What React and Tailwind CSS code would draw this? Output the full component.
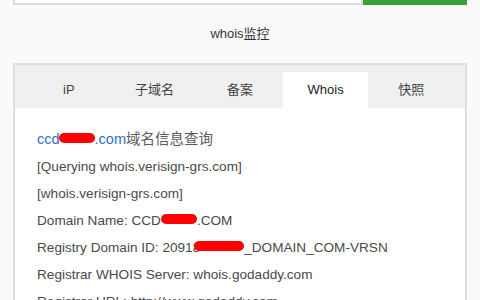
import React from "react";

const font = { fontFamily: '"Liberation Sans", Arial, "Noto Sans CJK SC", sans-serif' };

function Redact({ w, className = "" }) {
  return (
    <span
      className={"inline-block h-[10px] bg-[#ff0000] rounded-full align-middle -translate-y-[2px] " + className}
      style={{ width: w }}
    />
  );
}

export default function App() {
  const tabs = ["iP", "子域名", "备案", "Whois", "快照"];
  return (
    <div
      className="w-[480px] h-[300px] overflow-hidden bg-[#fafafa] text-[#333]"
      style={font}
    >
      <div className="flex px-[13px] -mt-[30px]">
        <div className="flex-1 h-[35px] bg-white border-2 border-[#dcdcdc]" />
        <div className="w-[104px] h-[35px] bg-[#3a9f3a]" />
      </div>
      <div className="h-[58px] flex items-center justify-center text-[13px] text-[#333]">
        whois监控
      </div>
      <div className="mx-[13px] border-2 border-[#dedede] bg-white">
        <div className="flex bg-[#f0f0f0] pt-[7px] px-[11px]">
          {tabs.map((t) => (
            <div
              key={t}
              className={
                "w-[86px] h-[36px] flex items-center justify-center text-[13px] " +
                (t === "Whois" ? "bg-white text-[#222]" : "text-[#444]")
              }
            >
              {t}
            </div>
          ))}
        </div>
        <div className="px-[22px] pt-[21px] text-[13.6px] text-[#4a4a4a]">
          <div className="h-[20px] leading-[20px] text-[14.5px] whitespace-nowrap">
            <span className="text-[#2f6fcb]">
              ccd
              <Redact w={36} className="-ml-[1px]" />
              .com
            </span>
            <span className="text-[#5a5a66]">域名信息查询</span>
          </div>
          <div className="mt-[4px]">
            {[
              <>[Querying whois.verisign-grs.com]</>,
              <>[whois.verisign-grs.com]</>,
              <>
                Domain Name: CCD
                <Redact w={36} />
                .COM
              </>,
              <>
                Registry Domain ID: 20918
                <Redact w={50} className="-ml-[6px]" />
                _DOMAIN_COM-VRSN
              </>,
              <>Registrar WHOIS Server: whois.godaddy.com</>,
              <>Registrar URL: http://www.godaddy.com</>,
            ].map((c, i) => (
              <div key={i} className="h-[27px] leading-[27px] whitespace-nowrap">
                {c}
              </div>
            ))}
          </div>
        </div>
      </div>
    </div>
  );
}
